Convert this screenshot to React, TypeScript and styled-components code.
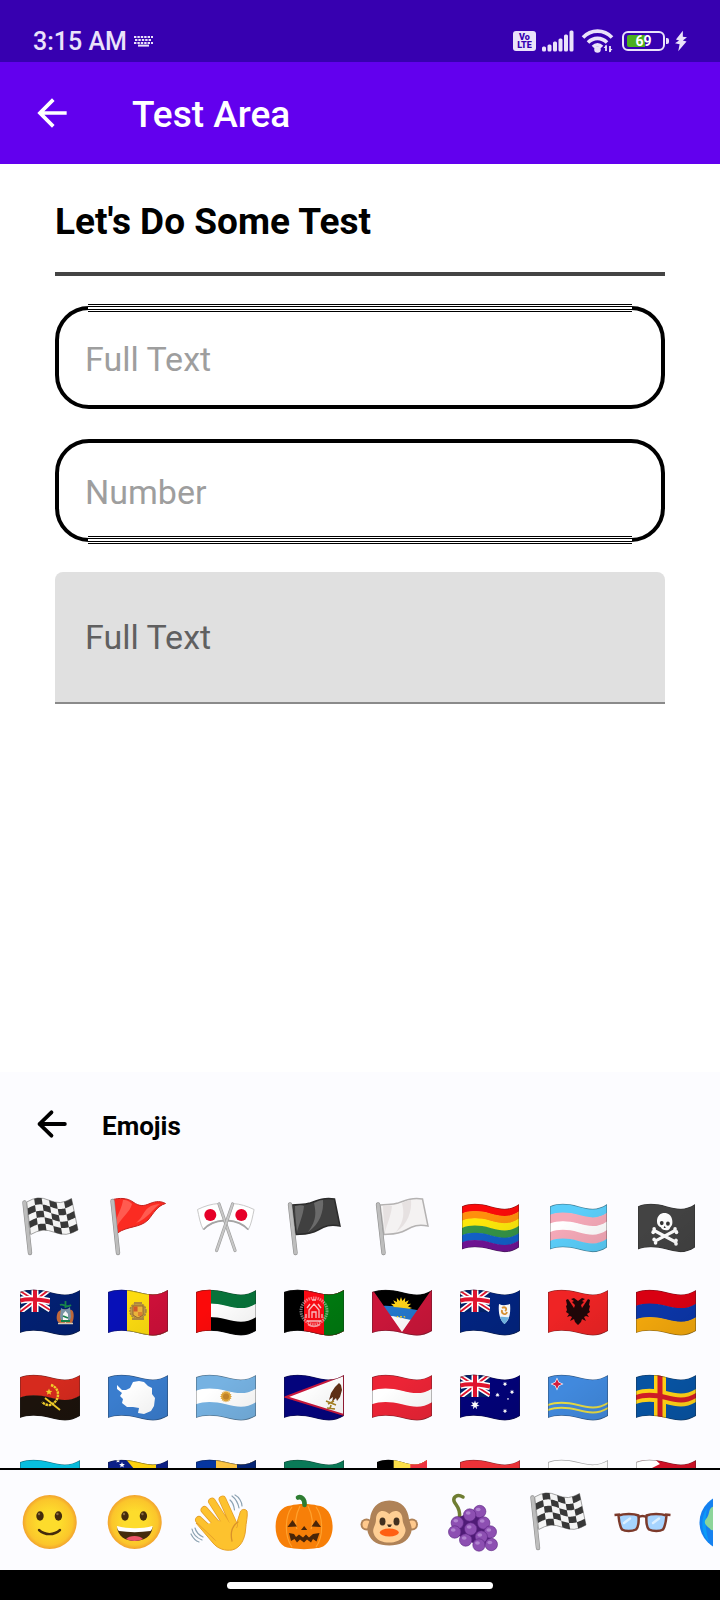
import React, { ReactNode } from "react";
import styled, { createGlobalStyle } from "styled-components";

const GlobalStyle = createGlobalStyle`
  *, *::before, *::after { box-sizing: border-box; }
  body {
    margin: 0;
    background: #fff;
    color: #000;
    font-family: Roboto, "Liberation Sans", sans-serif;
  }
  button, input { font: inherit; }
`;

/* ---------- layout ---------- */

const Screen = styled.div`
  display: flex;
  flex-direction: column;
  min-height: 100vh;
`;

const StatusBar = styled.div`
  display: flex;
  align-items: flex-end;
  justify-content: space-between;
  height: 62px;
  padding: 0 33px 9px;
  background: #3700b0;
  color: #eae2fa;
`;

const StatusGroup = styled.div<{ $gap: number }>`
  display: flex;
  align-items: center;
  gap: ${(p) => p.$gap}px;
  height: 24px;
`;

const Clock = styled.span`
  padding-top: 2px;
  font-size: 25px;
  font-weight: 500;
  line-height: 24px;
`;

const VolteBadge = styled.span`
  display: flex;
  flex-direction: column;
  align-items: center;
  justify-content: center;
  width: 23px;
  height: 20px;
  border-radius: 3px;
  background: #eae2fa;
  color: #3700b0;
  font-size: 9px;
  font-weight: 900;
  line-height: 8px;
`;

const Battery = styled.span`
  display: flex;
  align-items: center;
  gap: 1px;

  &::after {
    content: "";
    width: 3px;
    height: 6px;
    border-radius: 0 2px 2px 0;
    background: #eae2fa;
  }
`;

const BatteryCell = styled.span`
  width: 43px;
  height: 20px;
  border: 2px solid #eae2fa;
  border-radius: 6px;
  padding: 2px 3px;
`;

const BatteryLevel = styled.span`
  display: block;
  height: 12px;
  border-radius: 2px;
  background: linear-gradient(90deg, #4caf1e 55%, transparent 55%);
  color: #fff;
  font-size: 14px;
  font-weight: 700;
  line-height: 13px;
  text-align: center;
`;

const AppBar = styled.header`
  display: flex;
  align-items: center;
  gap: 58px;
  height: 102px;
  padding: 0 30px;
  background: #6200ee;
  color: #fff;
`;

const IconButton = styled.button`
  display: flex;
  padding: 0;
  border: 0;
  background: none;
  color: inherit;
`;

const AppTitle = styled.h1`
  margin: 0;
  padding-top: 4px;
  font-size: 37px;
  font-weight: 500;
  line-height: 44px;
`;

const Content = styled.main`
  flex: 1;
  display: flex;
  flex-direction: column;
  gap: 30px;
  padding: 34px 55px;
`;

const Heading = styled.h2`
  margin: 0;
  padding: 2px 0 28px;
  border-bottom: 4px solid #444;
  font-size: 37px;
  font-weight: 700;
  line-height: 44px;
`;

const OutlinedField = styled.div<{ $seam: "top" | "bottom" }>`
  position: relative;
  display: flex;

  &::after {
    content: "";
    position: absolute;
    ${(p) => p.$seam}: -2px;
    left: 33px;
    right: 33px;
    height: 8px;
    background: linear-gradient(
      #000 1px, #fff 1px 2px, #000 2px 3px, #fff 3px 5px,
      #000 5px 6px, #fff 6px 7px, #000 7px
    );
  }
`;

const OutlinedInput = styled.input`
  width: 100%;
  height: 103px;
  padding: 2px 26px 0;
  border: 4px solid #000;
  border-radius: 34px;
  background: #fff;
  font-size: 34px;
  outline: none;

  &::placeholder { color: #9e9e9e; opacity: 1; }
`;

const FilledInput = styled.input`
  width: 100%;
  height: 132px;
  padding: 0 30px;
  border: 0;
  border-bottom: 2px solid #8a8a8a;
  border-radius: 8px 8px 0 0;
  background: #e0e0e0;
  font-size: 34px;
  outline: none;

  &::placeholder { color: #606060; opacity: 1; }
`;

const EmojiPanel = styled.section`
  background: #fcfcff;
`;

const PanelHeader = styled.div`
  display: flex;
  align-items: center;
  gap: 28px;
  height: 111px;
  padding: 0 30px 8px;
`;

const PanelTitle = styled.h3`
  margin: 0;
  padding-top: 4px;
  font-size: 26px;
  font-weight: 700;
  line-height: 32px;
`;

const EmojiGrid = styled.div`
  display: grid;
  grid-template-columns: repeat(8, 1fr);
  grid-auto-rows: 85px;
  height: 285px;
  padding: 0 10px 0 6px;
  overflow: hidden;
`;

const EmojiButton = styled.button`
  display: flex;
  align-items: center;
  justify-content: center;
  padding: 0;
  border: 0;
  background: none;
`;

const TabBar = styled.nav`
  height: 102px;
  padding: 0 7px 0 8px;
  border-top: 2px solid #000;
`;

const TabStrip = styled.div`
  display: grid;
  grid-auto-flow: column;
  grid-auto-columns: 12%;
  height: 100%;
  padding-top: 2px;
  overflow: hidden;
`;

const NavBar = styled.footer`
  display: flex;
  justify-content: center;
  align-items: center;
  height: 30px;
  background: #000;
`;

const HomePill = styled.span`
  width: 37%;
  height: 7px;
  border-radius: 4px;
  background: #fff;
`;

/* ---------- status and bar icons ---------- */

const KeyboardIcon = () => (
  <svg width="19" height="12" viewBox="0 0 19 12" stroke="#eae2fa" strokeWidth="2" fill="none">
    <path d="M0 2H19M0 8H19" strokeDasharray="2.4 1" />
    <path d="M1 5H18" strokeDasharray="2.4 1" />
    <path d="M4 10.6H15" />
  </svg>
);

const SignalIcon = () => (
  <svg width="33" height="22" viewBox="0 0 33 22" fill="#eae2fa">
    {[5, 7, 10, 13, 17, 21].map((h, i) => (
      <rect key={h} x={i * 5.5} y={21.5 - h} width="4" height={h} rx="1.5" />
    ))}
  </svg>
);

const WifiIcon = () => (
  <svg width="35" height="24" viewBox="0 0 35 24" fill="none" stroke="#eae2fa" strokeWidth="3.6">
    <path d="M2 8.5C10 0 23 0 31 8.5" />
    <path d="M7 13.5C12.500 8 20.500 8 26 13.5" />
    <path d="M12 18C14.800 15 18.200 15 21 18" />
    <circle cx="16.5" cy="20.500" r="1.500" fill="#eae2fa" />
    <path d="M25 16.5V22M29 17V23" strokeWidth="1.8" />
    <path d="M22.500 19L25.500 15.500V19ZM31.500 20L28.500 23.500V20Z" fill="#eae2fa" stroke="none" />
  </svg>
);

const BoltIcon = () => (
  <svg width="12" height="22" viewBox="0 0 13 22" fill="#eae2fa">
    <path d="M8.500 0L1 9.500L4.500 10.500L0 13.500L5 14.500L3.500 22L12.500 11.500L8.500 10.500L13 7L8.500 6.500Z" />
  </svg>
);

const ArrowBack = () => (
  <svg width="44" height="44" viewBox="0 0 24 24" fill="currentColor">
    <path d="M20 11H7.83l5.59-5.59L12 4l-8 8 8 8 1.41-1.41L7.83 13H20v-2z" />
  </svg>
);

const ArrowBackRound = () => (
  <svg
    width="44" height="44" viewBox="0 0 24 24" fill="none"
    stroke="currentColor" strokeWidth="2.100" strokeLinecap="round" strokeLinejoin="round"
  >
    <path d="M19 12H5.200M11.700 5.600L5.200 12L11.700 18.400" />
  </svg>
);

/* ---------- waving flags ---------- */

const EmojiSvg = ({ children }: { children: ReactNode }) => (
  <svg width="60" height="60" viewBox="0 0 60 60" overflow="visible" aria-hidden="true">{children}</svg>
);

/* Closed area between two parallel wave lines. */
const band = (a: number, b: number) =>
  `M0 ${a}C8 ${a - 3} 18 ${a - 3} 30 ${a}C42 ${a + 3} 50 ${a + 4} 60 ${a - 2}` +
  `V${b - 2}C50 ${b + 4} 42 ${b + 3} 30 ${b}C18 ${b - 3} 8 ${b - 3} 0 ${b}Z`;

const TOP = 11;
const BOTTOM = 52;

const Wave = ({ id, children, tall }: { id: string; children: ReactNode; tall?: boolean }) => (
  <EmojiSvg>
    <defs>
      <clipPath id={`clip-${id}`}><path d={band(TOP, BOTTOM)} /></clipPath>
      <linearGradient id={`shade-${id}`} x1="0" y1="0" x2="1" y2="1">
        <stop offset=".3" stopColor="#000" stopOpacity="0" />
        <stop offset="1" stopColor="#000" stopOpacity=".08" />
      </linearGradient>
    </defs>
    <g transform={tall ? "translate(2 -1.5) scale(.95 1.06)" : undefined}>
      <g clipPath={`url(#clip-${id})`}>
        {children}
        <path d={band(TOP, BOTTOM)} fill={`url(#shade-${id})`} stroke="#222" strokeOpacity=".4" strokeWidth="1.5" />
      </g>
    </g>
  </EmojiSvg>
);

const Rows = ({ colors, sizes }: { colors: string[]; sizes?: number[] }) => {
  const parts = sizes ?? colors.map(() => 1);
  const total = parts.reduce((s, n) => s + n, 0);
  let at = TOP;
  return (
    <>
      {colors.map((color, i) => {
        const from = at;
        at += ((BOTTOM - TOP) * parts[i]) / total;
        return <path key={i} d={band(from, at + (i < colors.length - 1 ? 0.5 : 0))} fill={color} />;
      })}
    </>
  );
};

const Cols = ({ colors, stops }: { colors: string[]; stops: number[] }) => (
  <>
    {colors.map((color, i) => (
      <rect key={i} x={stops[i]} y="0" width={60 - stops[i]} height="60" fill={color} />
    ))}
  </>
);

const UnionJack = () => (
  <svg x="0" y="7" width="30" height="24" viewBox="0 0 30 24">
    <rect width="30" height="24" fill="#012169" />
    <path d="M0 3L30 22M0 24L30 1" stroke="#fff" strokeWidth="5" />
    <path d="M0 3L30 22M0 24L30 1" stroke="#e0142e" strokeWidth="1.8" />
    <path d="M15 0V24M0 12.5C8 10 18 11 30 13.5" stroke="#fff" strokeWidth="7" fill="none" />
    <path d="M15 0V24M0 12.5C8 10 18 11 30 13.5" stroke="#e0142e" strokeWidth="4" fill="none" />
  </svg>
);

const star = (cx: number, cy: number, r: number, points: number, inner = 0.45) =>
  Array.from({ length: points * 2 }, (_, i) => {
    const a = (Math.PI * i) / points - Math.PI / 2;
    const k = i % 2 ? r * inner : r;
    return `${(cx + k * Math.cos(a)).toFixed(2)},${(cy + k * Math.sin(a)).toFixed(2)}`;
  }).join(" ");

/* ---------- flags on poles ---------- */

const checkPoint = (u: number, v: number) => {
  const x = (6.7 + 4 * v) * (1 - u) + (51.5 + 6.5 * v) * u;
  const y = (6 + 32.5 * v) * (1 - u) + (2.5 + 31.5 * v) * u - 3.2 * Math.sin(2 * Math.PI * u);
  return `${x.toFixed(2)} ${y.toFixed(2)}`;
};

const checkArea = (u0: number, u1: number, v0: number, v1: number) => {
  const n = 8;
  const steps = Array.from({ length: n + 1 }, (_, i) => u0 + ((u1 - u0) * i) / n);
  return `M${steps.map((u) => checkPoint(u, v0)).join("L")}L${[...steps].reverse().map((u) => checkPoint(u, v1)).join("L")}Z`;
};

const Pole = ({ d }: { d: string }) => (
  <>
    <path d={d} stroke="#8f8f8f" strokeWidth="4.400" strokeLinecap="round" />
    <path d={d} stroke="#bdbdbd" strokeWidth="3.200" strokeLinecap="round" />
  </>
);

const Checkered = () => (
  <EmojiSvg>
    <path d={checkArea(0, 1, 0, 1)} fill="#f4f4f4" stroke="#8a8a8a" strokeWidth=".8" />
    {Array.from({ length: 30 }, (_, i) => [i % 6, Math.floor(i / 6)])
      .filter(([c, r]) => (c + r) % 2 === 1)
      .map(([c, r]) => (
        <path key={`${c}-${r}`} d={checkArea(c / 6, (c + 1) / 6, r / 5, (r + 1) / 5)} fill="#383838" />
      ))}
    <Pole d="M4.500 6.500L10 57" />
  </EmojiSvg>
);

const RedFlag = () => (
  <EmojiSvg>
    <path d="M5 3.5C11 2 19 1.500 25 6C32 11 36 10 42 7.500C48 5 53 5 57.500 7.500C49 10 46 17 40 24C32 32 19 30 9.500 37Z" fill="#fb2b22" stroke="#c41f1c" />
    <path d="M15 4C20 4 22 6 24 8C22 16 15 20 9 30L8 24C11 16 14 11 15 4Z" fill="#ff5b50" />
    <path d="M40 12C44 9 48 8 52 8C45 12 41 22 28 27C35 21 35 16 40 12Z" fill="#ff5b50" />
    <Pole d="M4.500 5L10 57" />
  </EmojiSvg>
);

const PlainFlag = ({ cloth, edge, fold }: { cloth: string; edge: string; fold: string }) => (
  <EmojiSvg>
    <path d="M8 9C16 8 20 9 26 7C34 4 40 1.500 50.500 3L56 30C46 28 41 30 34 34C26 38.500 20 38 12 38.500Z" fill={cloth} stroke={edge} strokeWidth="1.5" />
    <path d="M11 10C16 9 18 9 20 10C19 20 15 28 13 36C12 26 11 18 11 10Z" fill={fold} />
    <path d="M30 7C34 5 36 4 39 4C40 15 36 28 24 36C33 24 32 16 30 7Z" fill={fold} />
    <Pole d="M6 8.500L11.500 57" />
  </EmojiSvg>
);

const HalfCross = () => (
  <>
    <path d="M23 7.500C15 8 9 10 1.500 13.500C3 20 4 28 7.500 34C13 28 20 25 28 24.500Z" fill="#fff" stroke="#c9c9c9" />
    <path d="M7.500 33.500C13 27.500 20 25 28 24.500" stroke="#a5a5a5" strokeWidth="1.8" fill="none" />
    <circle cx="14.300" cy="19" r="6" fill="#e60028" />
    <path d="M23 8L39 54.500" stroke="#9d9d9d" strokeWidth="3.200" strokeLinecap="round" />
    <path d="M23 8L39 54.500" stroke="#c8c8c8" strokeWidth="2" strokeLinecap="round" />
  </>
);

const CrossedFlags = () => (
  <EmojiSvg>
    <HalfCross />
    <g transform="translate(59.6 0) scale(-1 1)"><HalfCross /></g>
  </EmojiSvg>
);

/* ---------- category icons ---------- */

const Face = ({ id, children }: { id: string; children: ReactNode }) => (
  <EmojiSvg>
    <defs>
      <radialGradient id={`face-${id}`}>
        <stop offset=".4" stopColor="#fddc2c" />
        <stop offset=".85" stopColor="#fbc52b" />
        <stop offset="1" stopColor="#f2a32f" />
      </radialGradient>
    </defs>
    <circle cx="29.700" cy="31" r="27" fill={`url(#face-${id})`} />
    {[20, 38.4].map((x) => (
      <g key={x}>
        <ellipse cx={x} cy="25" rx="3.700" ry="4.700" fill="#442b0c" />
        <circle cx={x - 1} cy="23" r="1.200" fill="#8a6a40" />
      </g>
    ))}
    {children}
  </EmojiSvg>
);

const Smile = () => (
  <Face id="smile">
    <path d="M19 39C25 44.500 34 44.500 40 39" stroke="#442b0c" strokeWidth="2.400" strokeLinecap="round" fill="none" />
  </Face>
);

const Grin = () => (
  <Face id="grin">
    <path d="M12 36C23 38.500 37 38.500 47.500 36C47 45 39 50 29.700 50C20 50 13 45 12 36Z" fill="#442b0c" />
    <path d="M12 35C23 38 37 38 47.500 35C47.500 37.500 46.500 39 45.500 40C35 41.500 24 41.500 14 40C12.800 39 12 37.500 12 35Z" fill="#fff" />
    <path d="M21 48C24 44 35 44 38 48C33 50.600 26 50.600 21 48Z" fill="#ef5668" />
  </Face>
);

const FINGERS = "M10 29L28 46M15.5 19L33 39M23 10.5L38 34M33.5 8.5L45 34";

const WavingHand = () => (
  <EmojiSvg>
    <path d="M7 32L24 52C29 58 36 60 43 59C52 57 56 47 56.500 39C57 31 59 25 58 20C55.500 17 51.500 18.500 51 22L47.500 33L36 28L20 34Z" fill="#fdc22e" stroke="#e6a02a" />
    <path d={FINGERS} stroke="#e6a02a" strokeWidth="7.800" strokeLinecap="round" />
    <path d={FINGERS} stroke="#fdc22e" strokeWidth="6.200" strokeLinecap="round" />
    <path d="M14 34L29 52L40 57L51 48L46 33L30 30Z" fill="#fdc22e" />
    <path d="M49 31C43 35 41 41 43 50" stroke="#d9912a" strokeWidth="1.300" fill="none" strokeLinecap="round" />
    <path d="M43 5C47 8 49 12 50 17M41 9C43.500 11 45 15 45.500 19M46 4C50 6 53 11 53 15M3 38C4 43 8 47 13 49M6 37C7 41 10 44 14 46M2 43C4 47 7 50 10 51" stroke="#8ca2b2" strokeWidth="1.200" fill="none" strokeLinecap="round" />
  </EmojiSvg>
);

const Pumpkin = () => (
  <EmojiSvg>
    <path d="M17 14.500C23 12.500 37 12.500 43 14.500C53 15 58.600 24 58.600 36C58.600 48 51 57.500 43 57C36 58.500 24 58.500 17 57C8 57.500 1.600 48 1.600 36C1.600 24 7 15 17 14.500Z" fill="#f77f08" />
    <path d="M18 16C11 25 10 45 18 56M42 16C49 25 50 45 42 56M26 15C21 25 21 34 23 38M34 15C39 25 39 34 37 38" stroke="#ffa22e" strokeWidth="1.200" fill="none" />
    <path d="M24 6.500C27 5 31 8 30.500 14" stroke="#2e7d32" strokeWidth="4.600" strokeLinecap="round" fill="none" />
    <path d="M13.500 36L18.500 29L23 35.500ZM47 36L42 29L37.500 35.500ZM27 39L30.200 35L33.200 39Z" fill="#4a2508" />
    <path d="M15 42L20 43L22 46L25 43.500L29 46.500L32 43.500L35 46.500L39 43L45.500 42L42.500 50.500L39 48L37 51.500L33 48.500L30 51.500L26 48.500L23 51.500L20.500 48L17 50Z" fill="#4a2508" />
  </EmojiSvg>
);

const Monkey = () => (
  <EmojiSvg>
    {[7.5, 53].map((x) => (
      <g key={x}>
        <circle cx={x} cy="33.500" r="6" fill="#af8257" />
        <circle cx={x} cy="33.500" r="4" fill="#ffc98c" />
      </g>
    ))}
    <path d="M30.300 9.500C43 9.500 49 18 50 28C51 33 54 36 52 42C49 51 40 54.500 30.300 54.500C20 54.500 12 51 9 42C7 36 10 33 11 28C12 18 18 9.500 30.300 9.500Z" fill="#af8257" />
    <path d="M30.300 23C35 18 43 19 43.500 28C44 35 48 37 46 42C43 50 36 51.500 30.300 51.500C24 51.500 17 50 14.500 42C13 37 17 35 17 28C17.500 19 25 18 30.300 23Z" fill="#ffcf94" />
    <ellipse cx="23.500" cy="30.500" rx="3" ry="4" fill="#42301f" />
    <ellipse cx="37.500" cy="30.500" rx="3" ry="4" fill="#42301f" />
    <path d="M28 33.500H33L31.500 36H29.500Z" fill="#42301f" />
    <ellipse cx="30.300" cy="41.500" rx="9.500" ry="4" fill="#ff5f12" />
  </EmojiSvg>
);

const GRAPES = [
  [36.7, 20.5], [14.3, 31.8], [40.7, 32], [11.7, 41], [47.3, 41], [26.7, 24],
  [38.3, 46], [22.7, 49], [27.7, 38], [36, 54], [48.3, 53.5],
];

const Grapes = () => (
  <EmojiSvg>
    <path d="M20 6C14 2.500 10 6 11 10C12 14 18 16 16.500 27" stroke="#6f7d32" strokeWidth="3.500" fill="none" strokeLinecap="round" />
    <path d="M12 28L34 18L46 34L48 54L34 54L14 44Z" fill="#4f1b76" />
    {GRAPES.map(([x, y]) => (
      <g key={`${x}-${y}`}>
        <circle cx={x} cy={y} r="6.200" fill="#8d4fb2" stroke="#5a2482" strokeWidth=".6" />
        <ellipse cx={x - 1.5} cy={y - 2} rx="2.400" ry="1.800" fill="#b183d0" />
      </g>
    ))}
  </EmojiSvg>
);

const Glasses = () => (
  <EmojiSvg>
    <path d="M11.500 33L19 27M40.500 33L48 27" stroke="#dff0ff" strokeWidth="3" />
    <g stroke="#7c3a2b" strokeWidth="2.500" strokeLinejoin="round">
      <path d="M6.500 24.500C12 22.500 22 22.500 26.500 24.500C27 31 26 36.500 24 38.500C20 40.500 13 40.500 10 38.500C8 35.500 7 30.500 6.500 24.500Z" fill="#a6d4ff" />
      <path d="M54.500 24.500C49 22.500 39 22.500 34.500 24.500C34 31 35 36.500 37 38.500C41 40.500 48 40.500 51 38.500C53 35.500 54 30.500 54.500 24.500Z" fill="#a6d4ff" />
      <path d="M2.500 24L8 23.500M58.500 24L53 23.500M26 26.500C29 24.500 32 24.500 35 26.500" fill="none" />
    </g>
    <path d="M12 32L18 27.500M41 32L47 27.500" stroke="#dcefff" strokeWidth="2.500" strokeLinecap="round" />
  </EmojiSvg>
);

const Globe = () => (
  <EmojiSvg>
    <circle cx="30.500" cy="31.500" r="28" fill="#1480f0" />
    <path d="M10 17C3 28 4 42 12 51C8 39 8 28 10 17Z" fill="#0a9cf8" />
    <path d="M15 16C11 19 13 24 9 28C5 33 12 36 14 39L26 40L24 14Z" fill="#8bd49a" />
  </EmojiSvg>
);

/* ---------- emoji data ---------- */

const FLAGS: [string, ReactNode][] = [
  ["Chequered flag", <Checkered />],
  ["Triangular flag", <RedFlag />],
  ["Crossed flags", <CrossedFlags />],
  ["Black flag", <PlainFlag cloth="#404040" edge="#2b2b2b" fold="#6a6a6a" />],
  ["White flag", <PlainFlag cloth="#f4f2f2" edge="#b4b2b2" fold="#e6e1e1" />],
  ["Rainbow flag", <Wave id="rainbow" tall><Rows colors={["#fa0a0a", "#ff8f0c", "#fde80a", "#359447", "#1260c8", "#6f1394"]} /></Wave>],
  ["Transgender flag", <Wave id="trans" tall><Rows colors={["#5bcefa", "#f5a9b8", "#fff", "#f5a9b8", "#5bcefa"]} /></Wave>],
  ["Pirate flag", (
    <Wave id="pirate" tall>
      <Rows colors={["#434343"]} />
      <path d="M17 34L40 45M18 44L39 34" stroke="#fff" strokeWidth="3" />
      {[[17, 32.5], [16, 35.5], [40, 43.5], [40, 46.5], [17, 42.5], [18.5, 45.5], [39, 32.5], [40.5, 35.5]].map(([x, y]) => (
        <circle key={`${x}-${y}`} cx={x} cy={y} r="1.900" fill="#fff" />
      ))}
      <path d="M20 25C20 15 35 15 36 24C37 30 34 30 33.500 32C32 35 25 34 24 31C22 30 20 29 20 25Z" fill="#fff" />
      <circle cx="25" cy="27" r="2" fill="#333" />
      <circle cx="31.500" cy="27.500" r="2" fill="#333" />
      <path d="M28 29.500L29.300 31.500H27Z" fill="#333" />
    </Wave>
  )],
  ["Ascension Island", (
    <Wave id="ac">
      <Rows colors={["#022072"]} /><UnionJack />
      <path d="M38 31C42 27 47 29 50 29C54 27 55 37 52 42L40 42C36 41 36 35 38 31Z" fill="#c76c3c" />
      <path d="M41 27C43 29 48 29 50 26L51 36C50 43 41 43 40 36Z" fill="#7d98ac" />
      <path d="M43 33L45.500 30L48 33V39L45.500 42L43 39Z" fill="#fff" />
      <path d="M45.500 20V27M40 24C44 22 46 28 51 24M41 40H50M43 35L48 37" stroke="#18884c" strokeWidth="1.800" fill="none" />
      <path d="M38 42.500H53" stroke="#e5d7bd" strokeWidth="1.500" />
    </Wave>
  )],
  ["Andorra", (
    <Wave id="ad">
      <Cols colors={["#0710b8", "#fddc10", "#d0103a"]} stops={[0, 19, 41]} />
      <circle cx="30" cy="30" r="8" fill="#c09a4a" stroke="#a9873e" strokeWidth="1.500" strokeDasharray="2 1" />
      <path d="M25 25H35V34L30 37L25 34Z" fill="#f0b73c" stroke="#8a5f27" strokeWidth=".8" />
      <path d="M26 26H29V30H26ZM31 31V35M33 31V35" stroke="#d35b2c" strokeWidth="1.100" fill="#d35b2c" />
      <path d="M26 22H34M24 38H36" stroke="#b08a40" strokeWidth="1.800" />
    </Wave>
  )],
  ["United Arab Emirates", <Wave id="ae"><Rows colors={["#07733a", "#fff", "#000"]} /><rect width="15" height="60" fill="#fb0a0a" /></Wave>],
  ["Afghanistan", (
    <Wave id="af">
      <Cols colors={["#000", "#fb0a14", "#007a10"]} stops={[0, 20, 40]} />
      <circle cx="30" cy="30" r="13" stroke="#fff" strokeOpacity=".45" strokeWidth="3" strokeDasharray="1.500 .8" fill="none" />
      <path d="M22 37V33M25 37V29L30 23L35 29V37M38 37V33M28 37V31H32V37M23 40H37M23 27L26 23M37 27L34 23M28 19H32" stroke="#fff" strokeOpacity=".75" strokeWidth="1.300" fill="none" />
      <path d="M24 43.500C28 46 32 46 36 43.500" stroke="#fff" strokeOpacity=".6" strokeWidth="1.500" fill="none" />
    </Wave>
  )],
  ["Antigua and Barbuda", (
    <Wave id="ag">
      <Rows colors={["#000", "#2478cc", "#fff"]} sizes={[16, 10, 15]} />
      <polygon points={star(29, 27, 11, 16, 0.65)} fill="#fdd21a" />
      <path d="M10 26C25 25 38 28 50 30V38C36 34 25 35 14 35Z" fill="#2478cc" />
      <path d="M0 8L30 51L60 8V60H0Z" fill="#cb163a" />
    </Wave>
  )],
  ["Anguilla", (
    <Wave id="ai">
      <Rows colors={["#022480"]} /><UnionJack />
      <path d="M39 23C43 25 47 24 50 23C51 33 49 40 44.500 43C40 39 38 32 39 23Z" fill="#fff" />
      <path d="M40 36C43 35 46 37 49 36C48 39 46 42 44.500 43C42 41 41 39 40 36Z" fill="#72b8e6" />
      <path d="M42 27C45 25 48 28 45 30M42 29C41 33 46 35 47 31" stroke="#de9636" strokeWidth="1.800" fill="none" />
    </Wave>
  )],
  ["Albania", (
    <Wave id="al">
      <Rows colors={["#ef2425"]} />
      <path d="M30 20L26 17L23 18L26 20L24 21L27 24L26 27L20 18L18 19L19 24L18 25L19 29L18 31L21 33L19 36L22 35L24 36L22 40L26 38L27 41L30 44L33 41L34 38L38 40L36 36L38 35L41 36L39 33L42 31L41 29L42 25L41 24L42 19L40 18L34 27L33 24L36 21L34 20L37 18L34 17Z" fill="#200608" />
    </Wave>
  )],
  ["Armenia", <Wave id="am"><Rows colors={["#d90012", "#0b36a8", "#f2a70c"]} /></Wave>],
  ["Angola", (
    <Wave id="ao">
      <Rows colors={["#d62a1e", "#1c130c"]} />
      <path d="M31 19C41 22 40 36 30 39C27 39.500 24 38 22 36" stroke="#f4d02a" strokeWidth="2.400" strokeDasharray="2.500 .7" fill="none" />
      <path d="M25 32L40 44" stroke="#f4d02a" strokeWidth="1.800" />
      <polygon points={star(29, 26, 3.5, 5)} fill="#f4d02a" />
    </Wave>
  )],
  ["Antarctica", (
    <Wave id="aq">
      <Rows colors={["#3a7dce"]} />
      <path d="M9 19L14 24L18 24L22 22L25 16L31 15L36 16L40 20L44 22L44 28L47 32L46 40L43 45L36 48L30 47L31 42L25 41L19 41L14 37L15 33L12 30L14 27L9 23Z" fill="#fff" />
    </Wave>
  )],
  ["Argentina", (
    <Wave id="ar">
      <Rows colors={["#76b2e2", "#fff", "#76b2e2"]} />
      <polygon points={star(30, 30.5, 6, 16, 0.75)} fill="#e0a63a" />
      <circle cx="30" cy="30.500" r="3" fill="#c4862b" />
    </Wave>
  )],
  ["American Samoa", (
    <Wave id="as">
      <Rows colors={["#04047c"]} />
      <path d="M2 31L60 9V49Z" fill="#fff" stroke="#c8183c" strokeWidth="2" />
      <path d="M55 17L51 21L47 27L45 34L49 31L48 36L52 32L53 35L56 31L58 24L57 19Z" fill="#613016" />
      <path d="M42 35L52 39M44 38L50 35M43 42L51 43M47 39L46 43" stroke="#a98322" strokeWidth="1.600" />
    </Wave>
  )],
  ["Austria", <Wave id="at"><Rows colors={["#ec2436", "#fff", "#ec2436"]} /></Wave>],
  ["Australia", (
    <Wave id="au">
      <Rows colors={["#020278"]} /><UnionJack />
      <polygon points={star(15, 39, 4.7, 7)} fill="#fff" />
      {[[45, 18], [52, 26], [37.5, 29], [45, 45]].map(([x, y]) => (
        <polygon key={`${x}-${y}`} points={star(x, y, 2.4, 7)} fill="#fff" />
      ))}
      <polygon points={star(48, 33, 1.3, 5)} fill="#fff" />
    </Wave>
  )],
  ["Aruba", (
    <Wave id="aw">
      <Rows colors={["#4189dd"]} />
      <path d={band(38, 40)} fill="#e8dc44" /><path d={band(43, 45)} fill="#e8dc44" />
      <polygon points={star(9, 18, 6.5, 4)} fill="#fff" />
      <polygon points={star(9, 18, 5, 4)} fill="#d61f3e" />
    </Wave>
  )],
  ["Åland Islands", (
    <Wave id="ax">
      <Rows colors={["#0753a2"]} />
      <path d={band(25, 38)} fill="#fdd016" /><rect x="18" width="12" height="60" fill="#fdd016" />
      <path d={band(29, 34)} fill="#d01c26" /><rect x="21.500" width="5" height="60" fill="#d01c26" />
    </Wave>
  )],
  ["Kazakhstan", <Wave id="kz"><Rows colors={["#08bfe0"]} /></Wave>],
  ["Bosnia and Herzegovina", (
    <Wave id="ba">
      <Rows colors={["#0c2088"]} />
      <path d="M16 6H48V44Z" fill="#fdd20e" />
      <polygon points={star(10, 9.5, 2.5, 5)} fill="#fff" />
      <polygon points={star(14, 14, 3, 5)} fill="#fff" />
    </Wave>
  )],
  ["Barbados", <Wave id="bb"><Cols colors={["#0636a0", "#fdc542", "#062678"]} stops={[0, 20, 41]} /></Wave>],
  ["Bangladesh", <Wave id="bd"><Rows colors={["#0a7a58"]} /><circle cx="25" cy="30" r="12" fill="#f42a41" /></Wave>],
  ["Belgium", (
    <EmojiSvg>
      <svg x="5" y="0" width="50" height="60" viewBox="0 0 60 60" preserveAspectRatio="none">
        <clipPath id="clip-be"><path d={band(TOP, BOTTOM)} /></clipPath>
        <g clipPath="url(#clip-be)"><Cols colors={["#000", "#fde04a", "#ee3340"]} stops={[0, 20, 40]} /></g>
      </svg>
    </EmojiSvg>
  )],
  ["Burkina Faso", <Wave id="bf"><Rows colors={["#ee3238", "#1c9a44"]} /><polygon points={star(30, 31, 8, 5)} fill="#e9b53c" /></Wave>],
  ["Bulgaria", <Wave id="bg"><Rows colors={["#fff", "#0a966e", "#d62612"]} /></Wave>],
  ["Bahrain", <Wave id="bh"><Rows colors={["#ce1126"]} /><path d="M0 0H10L24 13L14 18L24 23L14 28L24 33L14 37L24 42L14 60H0Z" fill="#fff" /></Wave>],
];

const CATEGORIES: [string, ReactNode][] = [
  ["Recent", <Smile />],
  ["Smileys", <Grin />],
  ["People", <WavingHand />],
  ["Celebration", <Pumpkin />],
  ["Animals", <Monkey />],
  ["Food", <Grapes />],
  ["Flags", <Checkered />],
  ["Objects", <Glasses />],
  ["Travel", <Globe />],
];

export default function App() {
  return (
    <Screen>
      <GlobalStyle />
      <StatusBar>
        <StatusGroup $gap={7}>
          <Clock>3:15 AM</Clock>
          <KeyboardIcon />
        </StatusGroup>
        <StatusGroup $gap={6}>
          <VolteBadge><span>Vo</span><span>LTE</span></VolteBadge>
          <SignalIcon />
          <WifiIcon />
          <Battery><BatteryCell><BatteryLevel>69</BatteryLevel></BatteryCell></Battery>
          <BoltIcon />
        </StatusGroup>
      </StatusBar>
      <AppBar>
        <IconButton type="button" aria-label="Back"><ArrowBack /></IconButton>
        <AppTitle>Test Area</AppTitle>
      </AppBar>
      <Content>
        <Heading>Let's Do Some Test</Heading>
        <OutlinedField $seam="top">
          <OutlinedInput type="text" placeholder="Full Text" aria-label="Full Text" />
        </OutlinedField>
        <OutlinedField $seam="bottom">
          <OutlinedInput type="text" inputMode="numeric" placeholder="Number" aria-label="Number" />
        </OutlinedField>
        <FilledInput type="text" placeholder="Full Text" aria-label="Full Text, filled" />
      </Content>
      <EmojiPanel>
        <PanelHeader>
          <IconButton type="button" aria-label="Close emojis"><ArrowBackRound /></IconButton>
          <PanelTitle>Emojis</PanelTitle>
        </PanelHeader>
        <EmojiGrid>
          {FLAGS.map(([name, art]) => (
            <EmojiButton key={name} type="button" aria-label={name}>{art}</EmojiButton>
          ))}
        </EmojiGrid>
        <TabBar>
          <TabStrip>
            {CATEGORIES.map(([name, art]) => (
              <EmojiButton key={name} type="button" aria-label={name}>{art}</EmojiButton>
            ))}
          </TabStrip>
        </TabBar>
      </EmojiPanel>
      <NavBar><HomePill /></NavBar>
    </Screen>
  );
}
